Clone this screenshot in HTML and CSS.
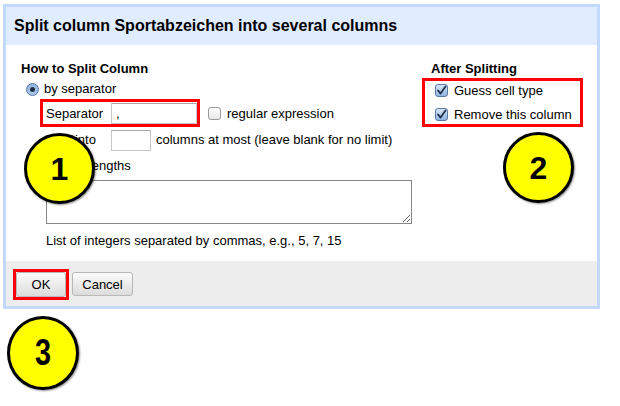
FILE: index.html
```html
<!DOCTYPE html>
<html>
<head>
<meta charset="utf-8">
<link rel="stylesheet" href="styles.css">
</head>
<body>
<div class="page">
  <div class="dialog">
    <div class="dialog-header">Split column Sportabzeichen into several columns</div>
    <div class="dialog-body">
      <div class="col-left">
        <div class="heading">How to Split Column</div>
        <div class="row radio-row">
          <span class="radio checked"><span class="dot"></span></span>
          <span>by separator</span>
        </div>
        <div class="sep-row">
          <div class="redbox sep-box">
            <span class="label">Separator</span>
            <input class="txt sep-input" type="text" value=",">
          </div>
          <span class="checkbox"></span>
          <span class="cb-label">regular expression</span>
        </div>
        <div class="row split-row">
          <span class="label">Split into</span>
          <input class="txt small-input" type="text" value="">
          <span>columns at most (leave blank for no limit)</span>
        </div>
        <div class="row radio-row2">
          <span class="radio"></span>
          <span>by field lengths</span>
        </div>
        <textarea class="lengths"></textarea>
        <div class="note">List of integers separated by commas, e.g., 5, 7, 15</div>
      </div>
      <div class="col-right">
        <div class="heading">After Splitting</div>
        <div class="redbox after-box">
          <div class="cb-row">
            <span class="checkbox checked"><svg width="11" height="11" viewBox="0 0 11 11"><path d="M2 5.5 L4.5 8.5 L9.5 1.5" fill="none" stroke="#1f2f4a" stroke-width="1.8" stroke-linecap="round" stroke-linejoin="round"/></svg></span>
            <span>Guess cell type</span>
          </div>
          <div class="cb-row">
            <span class="checkbox checked"><svg width="11" height="11" viewBox="0 0 11 11"><path d="M2 5.5 L4.5 8.5 L9.5 1.5" fill="none" stroke="#1f2f4a" stroke-width="1.8" stroke-linecap="round" stroke-linejoin="round"/></svg></span>
            <span>Remove this column</span>
          </div>
        </div>
      </div>
    </div>
    <div class="dialog-footer">
      <div class="redbox ok-box"><button class="btn ok">OK</button></div>
      <button class="btn cancel">Cancel</button>
    </div>
  </div>
  <div class="marker m1">1</div>
  <div class="marker m2">2</div>
  <div class="marker m3"><span class="narrow">3</span></div>
</div>
</body>
</html>
```

FILE: styles.css
```css
* { box-sizing: border-box; }
html, body { margin: 0; padding: 0; background: #fff; }
body {
  font-family: "Liberation Sans", Arial, sans-serif;
  font-size: 13px;
  color: #000;
  width: 620px;
  height: 406px;
  overflow: hidden;
}
.page { position: relative; width: 620px; height: 406px; padding: 4px 0 0 3px; }

.dialog {
  width: 597px;
  border: 3px solid #c3d9ff;
  background: #fff;
}
.dialog-header {
  height: 38px;
  background: #e0ecff;
  font-size: 16px;
  font-weight: bold;
  line-height: 38px;
  padding-left: 8px;
}
.dialog-body {
  height: 216px;
  display: flex;
  padding: 16px 0 0 15px;
}
.col-left { width: 410px; display: flex; flex-direction: column; }
.col-right { display: flex; flex-direction: column; }

.heading { font-weight: bold; line-height: 16px; height: 16px; }
.row { display: flex; align-items: center; line-height: 16px; }

.radio-row { margin-top: 4px; height: 16px; padding-left: 5px; gap: 5px; }
.radio {
  width: 13px; height: 13px; border-radius: 50%;
  border: 1px solid #8a95a5;
  background: linear-gradient(#fdfdfd, #d8dde3);
  display: inline-flex; align-items: center; justify-content: center;
}
.radio.checked {
  border-color: #5a7aa5;
  background: radial-gradient(circle at 50% 60%, #bcd6f2, #7fa8d8);
}
.radio .dot { width: 5px; height: 5px; border-radius: 50%; background: #1e2d44; }

.sep-row { display: flex; align-items: center; margin-top: 2px; height: 28px; margin-left: 19px; }
.redbox { border: 3px solid #ff0000; }
.sep-box { display: flex; align-items: center; height: 28px; width: 160px; padding-left: 3px; }
.label { width: 65px; flex: none; }
.txt {
  font-family: "Liberation Sans", Arial, sans-serif;
  font-size: 13px;
  border: 1px solid #c6c6c6;
  border-top-color: #a8a8a8;
  padding: 0 4px;
  margin: 0;
  outline: none;
  background: #fff;
}
.sep-input { width: 86px; height: 21px; }
.checkbox {
  width: 13px; height: 13px; flex: none;
  border: 1px solid #9a9a9a; border-radius: 3px;
  background: linear-gradient(#fff, #e8e8e8);
  display: inline-flex; align-items: center; justify-content: center;
}
.sep-row .checkbox { margin-left: 8px; }
.cb-label { margin-left: 6px; }
.checkbox.checked {
  border-color: #5a7aa5;
  background: linear-gradient(#d7e6f7, #8fb3df);
}

.split-row { margin-top: 2px; height: 22px; padding-left: 25px; }
.small-input { width: 40px; height: 21px; margin-right: 5px; }

.radio-row2 { margin-top: 7px; height: 16px; padding-left: 5px; gap: 5px; }

.lengths {
  margin: 6px 0 0 25px;
  width: 366px; height: 44px;
  border: 1px solid #888;
  resize: both;
  font-family: "Liberation Sans", Arial, sans-serif;
  font-size: 13px;
}
.note { margin-top: 9px; line-height: 16px; padding-left: 25px; }

.after-box { margin-left: -9px; margin-top: 1px; width: 161px; height: 49px; padding: 0 0 0 10px; display: flex; flex-direction: column; gap: 6px; }
.cb-row { display: flex; align-items: center; height: 18px; gap: 6px; }

.dialog-footer {
  height: 45px;
  background: #ededed;
  display: flex;
  align-items: flex-start;
  padding: 8px 0 0 7px;
}
.btn {
  font-family: "Liberation Sans", Arial, sans-serif;
  font-size: 13px;
  color: #000;
  height: 24px;
  border: 1px solid #b8b8b8;
  border-radius: 3px;
  background: linear-gradient(#fbfbfb, #dcdcdc);
  padding: 0;
  margin: 0;
}
.ok-box { height: 31px; width: 56px; padding: 0; display: flex; }
.ok { width: 50px; height: 25px; }
.cancel { width: 61px; margin: 3px 0 0 3px; height: 24px; }

.marker {
  position: absolute;
  width: 71px; height: 71px;
  border-radius: 50%;
  background: #ffff00;
  border: 3px solid #000;
  box-shadow: 1px 1px 2px rgba(0,0,0,0.45);
  font-family: "Liberation Sans", Arial, sans-serif;
  font-weight: bold;
  font-size: 32px;
  display: flex; align-items: center; justify-content: center;
  line-height: 1;
}
.m1 { left: 24px; top: 133px; }
.m2 { left: 503px; top: 132px; }
.m3 { left: 7px; top: 316px; width: 72px; height: 74px; font-size: 36px; }
.narrow { display: inline-block; transform: scaleX(0.8); }
```
